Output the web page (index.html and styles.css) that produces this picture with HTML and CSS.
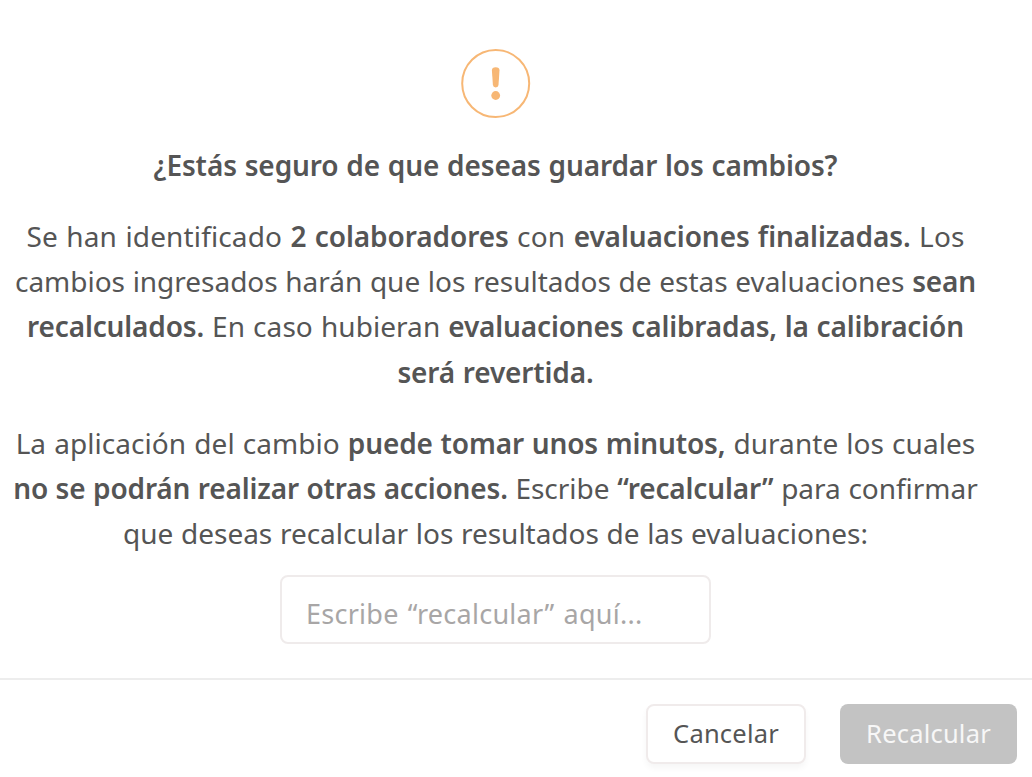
FILE: index.html
```html
<!DOCTYPE html>
<html lang="es">

<head>
    <meta charset="UTF-8">
    <meta name="viewport" content="width=device-width, initial-scale=1.0">
    <title>Guardar cambios</title>
    <link rel="stylesheet" href="styles.css">
</head>

<body>
    <div class="modal">
        <div class="modal-body">
            <svg class="warning-icon" viewBox="0 0 70 70" fill="none">
                <circle cx="34.7" cy="34.5" r="33.5" stroke="#f7b775" stroke-width="2" />
                <path d="M30.9 21.5q0-3.3 3.8-3.3t3.8 3.3l-1 14.5q-.2 2.4-2.8 2.4t-2.8-2.4z" fill="#f7b775" />
                <circle cx="34.7" cy="46.5" r="4.4" fill="#f7b775" />
            </svg>

            <h1><span class="line">¿Estás seguro de que deseas guardar los cambios?</span></h1>

            <p>
                <span class="line wide">Se han identificado <b>2 colaboradores</b> con <b>evaluaciones finalizadas.</b> Los</span>
                <span class="line tight">cambios ingresados harán que los resultados de estas evaluaciones <b>sean</b></span>
                <span class="line"><b>recalculados.</b> En caso hubieran <b>evaluaciones calibradas, la calibración</b></span>
                <span class="line"><b>será revertida.</b></span>
            </p>

            <p>
                <span class="line">La aplicación del cambio <b>puede tomar unos minutos,</b> durante los cuales</span>
                <span class="line tight"><b>no se podrán realizar otras acciones.</b> Escribe <b>“recalcular”</b> para confirmar</span>
                <span class="line tight">que deseas recalcular los resultados de las evaluaciones:</span>
            </p>

            <input class="confirm-input" type="text" placeholder="Escribe “recalcular” aquí...">
        </div>

        <div class="modal-footer">
            <button class="btn btn-cancel">Cancelar</button>
            <button class="btn btn-confirm" disabled>Recalcular</button>
        </div>
    </div>
</body>

</html>
```
FILE: styles.css
```css
* {
    margin: 0;
    padding: 0;
    box-sizing: border-box;
}

body {
    font-family: "Noto Sans", "Open Sans", sans-serif;
    background-color: #fff;
    color: #555;
    overflow: hidden;
}

.modal {
    height: 777px;
    display: flex;
    flex-direction: column;
}

.modal-body {
    width: 991px;
    height: 678px;
    padding-top: 49px;
    display: flex;
    flex-direction: column;
    align-items: center;
    text-align: center;
}

.warning-icon {
    width: 70px;
    height: 70px;
}

h1 {
    margin-top: 24px;
    font-size: 28px;
    line-height: 45px;
    font-weight: 600;
    letter-spacing: -0.1px;
    word-spacing: 0.6px;
}

p {
    margin-top: 26px;
    font-size: 28px;
    line-height: 45.2px;
    letter-spacing: 0.06px;
    word-spacing: 0.7px;
}

b {
    font-weight: 600;
    letter-spacing: -0.15px;
}

.line {
    display: block;
    white-space: nowrap;
}

.wide {
    letter-spacing: 0.14px;
    word-spacing: 1px;
}

.wide b {
    letter-spacing: -0.08px;
}

.tight {
    letter-spacing: -0.02px;
    word-spacing: 0.4px;
}

.confirm-input {
    width: 431px;
    height: 69px;
    margin-top: 19px;
    padding: 8px 24px 0;
    border: 2px solid #efebeb;
    border-radius: 8px;
    font-family: inherit;
    font-size: 27px;
    letter-spacing: 0.25px;
    word-spacing: 2px;
}

.confirm-input::placeholder {
    color: #a8a6a6;
}

.modal-footer {
    flex: 1;
    display: flex;
    justify-content: flex-end;
    gap: 34px;
    padding: 24px 15px 0 0;
    border-top: 2px solid #ededed;
}

.btn {
    height: 60px;
    padding-bottom: 2px;
    border-radius: 8px;
    font-family: inherit;
    font-size: 25.5px;
    letter-spacing: 0.2px;
}

.btn-cancel {
    width: 160px;
    background-color: #fff;
    border: 2px solid #f0ebeb;
    color: #555;
    box-shadow: 0 4px 6px rgba(0, 0, 0, 0.04);
}

.btn-confirm {
    width: 177px;
    background-color: #c3c3c3;
    border: none;
    color: #f7f7f7;
}
```
